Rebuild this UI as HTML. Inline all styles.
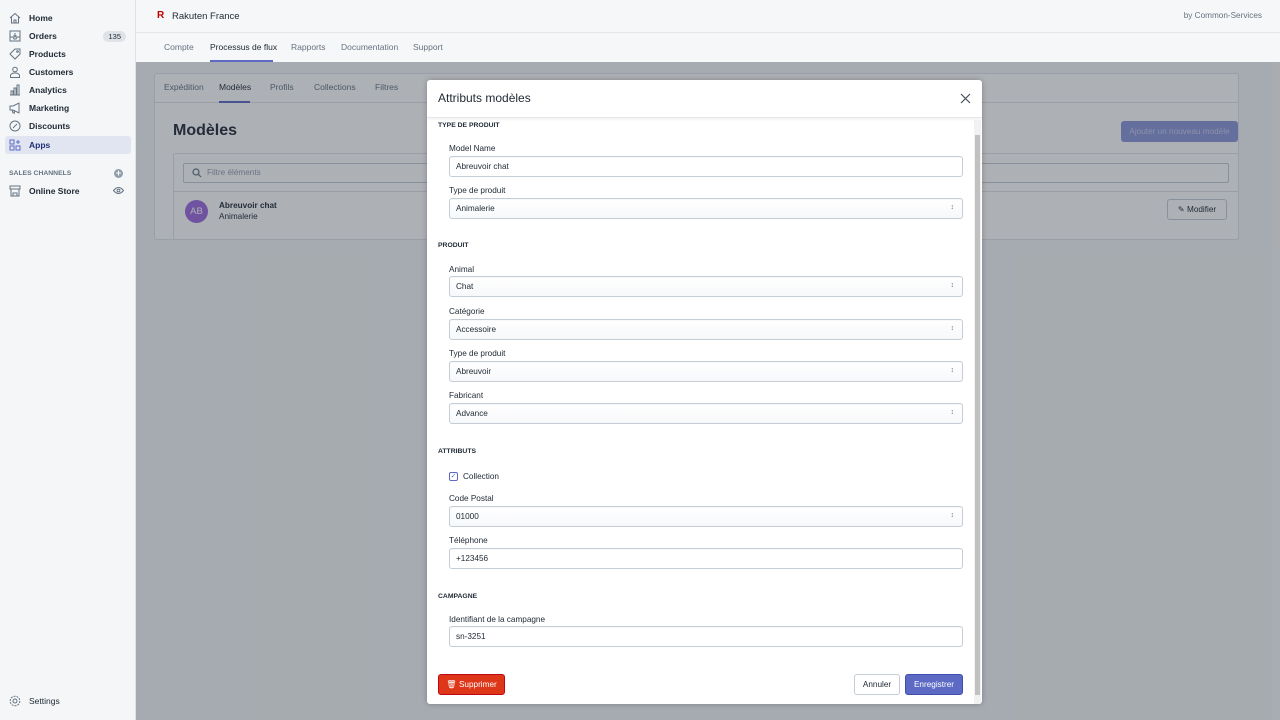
<!DOCTYPE html>
<html><head><meta charset="utf-8"><style>
*{box-sizing:border-box;margin:0;padding:0}
body{width:1280px;height:720px;overflow:hidden;font-family:"Liberation Sans",sans-serif;background:#f4f6f8;color:#212b36;position:relative;font-size:8.5px}
.sb{position:absolute;left:0;top:0;width:136px;height:720px;background:#f4f6f8;border-right:1px solid #dfe3e8}
.ni{position:absolute;left:5px;width:126px;height:18px;display:flex;align-items:center;font-weight:bold;font-size:8.5px;color:#212b36}
.ni svg{position:absolute;left:4px;width:12px;height:12px;stroke:#637381;fill:none;stroke-width:1}
.ni span{position:absolute;left:24px}
.badge{position:absolute;right:5px;background:#dfe3e8;border-radius:8px;padding:1px 5px;font-weight:normal;font-size:7.5px}
.top{position:absolute;left:136px;top:0;right:0;height:33px;border-bottom:1px solid #e3e6ea;background:#f6f7f9}
.tabs{position:absolute;left:136px;top:33px;right:0;height:29px;background:#f6f7f9}
.tab{position:absolute;top:9px;font-size:8.5px;color:#637381}
.main{position:absolute;left:136px;top:62px;right:0;bottom:0;background:#f4f6f8}
.ov{position:absolute;left:136px;top:62px;right:0;bottom:0;background:rgba(40,48,60,0.38)}
.modal{position:absolute;left:427px;top:80px;width:555px;height:624px;background:#fff;border-radius:3px;box-shadow:0 0 6px rgba(0,0,0,.25);overflow:hidden}
.mh{height:38px;border-bottom:1px solid #e6e8eb;box-shadow:0 1px 3px rgba(0,0,0,.08);font-size:12px;padding:11px 11px;color:#212b36}
.sec{position:absolute;left:11px;font-weight:bold;font-size:6.8px;color:#212b36}
.lbl{position:absolute;left:22px;font-size:8.2px;color:#212b36}
.inp{position:absolute;left:22px;width:514px;height:21px;border:1px solid #c4cdd5;border-radius:3px;background:#fff;font-size:8.2px;padding:5px 6px;box-shadow:inset 0 1px 0 rgba(99,115,129,.05)}
.sel{background:linear-gradient(#fff,#f7f8fa)}
.sel:after{content:"\2195";position:absolute;right:8px;top:5px;font-size:7px;color:#637381}
.btn{position:absolute;height:21px;border-radius:3px;font-size:8.2px;display:flex;align-items:center;justify-content:center}
</style></head><body>
<div class="sb">
 <div class="ni" style="top:9px"><svg viewBox="0 0 12 12"><path d="M1 6L6 1.5 11 6M2.5 5v6h7V5M5 11V8h2v3"/></svg><span>Home</span></div>
 <div class="ni" style="top:27px"><svg viewBox="0 0 12 12"><rect x="1" y="1" width="10" height="10"/><path d="M1 7h3l1 2h2l1-2h3M6 3v4M4.5 5.5L6 7l1.5-1.5"/></svg><span>Orders</span><span class="badge" style="left:auto">135</span></div>
 <div class="ni" style="top:45px"><svg viewBox="0 0 12 12"><path d="M1 6L6 1h5v5L6 11z"/><circle cx="8.5" cy="3.5" r=".8"/></svg><span>Products</span></div>
 <div class="ni" style="top:63px"><svg viewBox="0 0 12 12"><circle cx="6" cy="3.5" r="2.3"/><path d="M1.5 11.5v-2c0-1.5 2-2.5 4.5-2.5s4.5 1 4.5 2.5v2z"/></svg><span>Customers</span></div>
 <div class="ni" style="top:81px"><svg viewBox="0 0 12 12"><path d="M1 11h10M2 11V7h2v4M5 11V4h2v7M8 11V1h2v10"/></svg><span>Analytics</span></div>
 <div class="ni" style="top:99px"><svg viewBox="0 0 12 12"><path d="M1 4h3l6-3v10L4 8H1zM3 8l1 3h1.5L5 8"/></svg><span>Marketing</span></div>
 <div class="ni" style="top:117px"><svg viewBox="0 0 12 12"><circle cx="6" cy="6" r="5"/><path d="M4 8l4-4"/></svg><span>Discounts</span></div>
 <div class="ni" style="top:136px;background:#e1e5f2;border-radius:3px;color:#202e78"><svg viewBox="0 0 12 12" style="stroke:#5c6ac4"><rect x="1" y="1" width="4" height="4"/><rect x="1" y="7" width="4" height="4"/><rect x="7" y="7" width="4" height="4"/><path d="M9 1v4M7 3h4"/></svg><span>Apps</span></div>
 <div style="position:absolute;left:9px;top:170px;font-size:6.8px;font-weight:bold;color:#637381">SALES CHANNELS</div>
 <div style="position:absolute;left:114px;top:169px;width:9px;height:9px;border-radius:50%;background:#919eab;color:#fff;font-size:9px;line-height:9px;text-align:center;font-weight:bold">+</div>
 <div class="ni" style="top:182px"><svg viewBox="0 0 12 12"><path d="M1 1h10v3H1zM2 4v7h8V4M4 11V8h4v3"/></svg><span>Online Store</span></div>
 <svg style="position:absolute;left:113px;top:186px;width:11px;height:9px" viewBox="0 0 11 9" fill="none" stroke="#637381"><path d="M.5 4.5Q5.5-1.5 10.5 4.5Q5.5 10.5.5 4.5z"/><circle cx="5.5" cy="4.5" r="1.4"/></svg>
 <div class="ni" style="top:692px;font-weight:normal"><svg viewBox="0 0 12 12"><circle cx="6" cy="6" r="2"/><circle cx="6" cy="6" r="4.8" stroke-dasharray="2 1"/></svg><span>Settings</span></div>
</div>
<div class="top">
 <div style="position:absolute;left:21px;top:10px;color:#bf0000;font-weight:bold;font-size:10px">R</div>
 <div style="position:absolute;left:36px;top:11px;font-size:9.5px;color:#212b36">Rakuten France</div>
 <div style="position:absolute;right:18px;top:11px;font-size:8.2px;color:#637381">by Common-Services</div>
</div>
<div class="tabs">
 <div class="tab" style="left:28px">Compte</div>
 <div class="tab" style="left:74px;color:#212b36">Processus de flux</div>
 <div style="position:absolute;left:74px;top:27px;width:63px;height:2px;background:#5c6ac4"></div>
 <div class="tab" style="left:155px">Rapports</div>
 <div class="tab" style="left:205px">Documentation</div>
 <div class="tab" style="left:277px">Support</div>
</div>
<div class="main">
 <div style="position:absolute;left:18px;top:11px;width:1085px;height:167px;background:#fff;border:1px solid #dfe3e8;border-radius:3px">
  <div style="height:29px;border-bottom:1px solid #dfe3e8;font-size:8.5px;color:#637381;position:relative">
   <span style="position:absolute;left:9px;top:8px">Expédition</span><span style="position:absolute;left:64px;top:8px;color:#212b36">Modèles</span>
   <div style="position:absolute;left:64px;top:27px;width:31px;height:2px;background:#5c6ac4"></div>
   <span style="position:absolute;left:115px;top:8px">Profils</span><span style="position:absolute;left:159px;top:8px">Collections</span><span style="position:absolute;left:220px;top:8px">Filtres</span></div>
  <div style="position:absolute;left:18px;top:48px;font-size:16px;font-weight:bold">Modèles</div>
  <div style="position:absolute;left:966px;top:47px;width:117px;height:21px;background:#8c96d8;border-radius:3px;color:#c8ceee;font-size:8.2px;text-align:center;line-height:21px">Ajouter un nouveau modèle</div>
  <div style="position:absolute;left:18px;top:79px;width:1066px;height:87px;border:1px solid #dfe3e8;border-radius:3px">
   <div style="position:absolute;left:9px;top:9px;right:9px;height:20px;border:1px solid #c4cdd5;border-radius:2px;color:#919eab;font-size:8.2px;padding:4px 23px">Filtre éléments</div>
   <svg style="position:absolute;left:18px;top:14px;width:10px;height:10px" viewBox="0 0 10 10" fill="none" stroke="#637381" stroke-width="1.2"><circle cx="4" cy="4" r="3"/><path d="M6.2 6.2L9 9"/></svg>
   <div style="position:absolute;left:0;right:0;top:37px;border-top:1px solid #dfe3e8"></div>
   <div style="position:absolute;left:11px;top:46px;width:23px;height:23px;border-radius:50%;background:#9c6ade;color:#fff;font-size:9.5px;text-align:center;line-height:23px">AB</div>
   <div style="position:absolute;left:45px;top:47px;font-weight:bold;font-size:8.2px">Abreuvoir chat</div>
   <div style="position:absolute;left:45px;top:58px;font-size:8.2px">Animalerie</div>
   <div style="position:absolute;right:11px;top:45px;width:60px;height:21px;border:1px solid #c4cdd5;border-radius:3px;font-size:8.2px;text-align:center;line-height:19px">✎ Modifier</div>
  </div>
 </div>
</div>
<div class="ov"></div>
<div style="position:absolute;right:0;top:62px;width:8px;height:658px;background:#a9acb1"></div>
<div class="modal">
 <div class="mh">Attributs modèles</div>
 <svg style="position:absolute;left:533px;top:13px;width:11px;height:11px" viewBox="0 0 11 11" stroke="#454f5b" stroke-width="1.2"><path d="M1 1l9 9M10 1l-9 9"/></svg>
 <div style="position:absolute;right:1px;top:40px;width:7px;height:584px;background:#f1f1f1"></div>
 <div style="position:absolute;right:2px;top:55px;width:5px;height:560px;background:#c1c1c1"></div>
 <div class="sec" style="top:42px">TYPE DE PRODUIT</div>
 <div class="lbl" style="top:64px">Model Name</div>
 <div class="inp" style="top:76px">Abreuvoir chat</div>
 <div class="lbl" style="top:106px">Type de produit</div>
 <div class="inp sel" style="top:118px">Animalerie</div>
 <div class="sec" style="top:162px">PRODUIT</div>
 <div class="lbl" style="top:185px">Animal</div>
 <div class="inp sel" style="top:196px">Chat</div>
 <div class="lbl" style="top:227px">Catégorie</div>
 <div class="inp sel" style="top:239px">Accessoire</div>
 <div class="lbl" style="top:269px">Type de produit</div>
 <div class="inp sel" style="top:281px">Abreuvoir</div>
 <div class="lbl" style="top:311px">Fabricant</div>
 <div class="inp sel" style="top:323px">Advance</div>
 <div class="sec" style="top:368px">ATTRIBUTS</div>
 <div style="position:absolute;left:22px;top:392px;width:9px;height:9px;border:1px solid #5c6ac4;border-radius:2px;font-size:7px;line-height:8px;text-align:center;color:#5c6ac4">✓</div>
 <div class="lbl" style="top:392px;left:36px">Collection</div>
 <div class="lbl" style="top:414px">Code Postal</div>
 <div class="inp sel" style="top:426px">01000</div>
 <div class="lbl" style="top:456px">Téléphone</div>
 <div class="inp" style="top:468px">+123456</div>
 <div class="sec" style="top:513px">CAMPAGNE</div>
 <div class="lbl" style="top:535px">Identifiant de la campagne</div>
 <div class="inp" style="top:546px">sn-3251</div>
 <div class="btn" style="left:11px;top:594px;width:67px;background:#de3618;color:#fff;border:1px solid #bf0711">🗑&nbsp;Supprimer</div>
 <div class="btn" style="left:427px;top:594px;width:46px;background:#fff;border:1px solid #c4cdd5;color:#212b36">Annuler</div>
 <div class="btn" style="left:478px;top:594px;width:58px;background:#5c6ac4;border:1px solid #3f4eae;color:#fff">Enregistrer</div>
</div>
</body></html>
